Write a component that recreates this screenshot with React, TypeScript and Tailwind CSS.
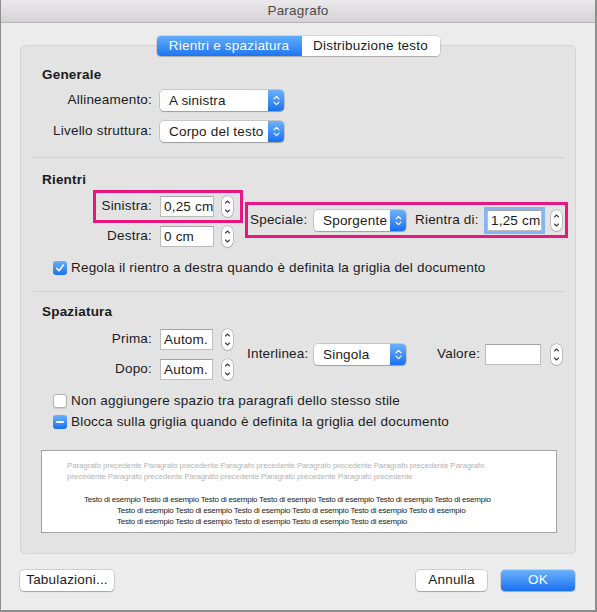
import React from "react";

type Sized = { value: string; className: string };

const Arrows = () => (
  <svg
    width="7"
    height="11"
    viewBox="0 0 7 11"
    fill="none"
    stroke="currentColor"
    strokeWidth="1.2"
    strokeLinecap="round"
    strokeLinejoin="round"
  >
    <path d="M1 3.8 3.5 1.3 6 3.8" />
    <path d="M1 7.2 3.5 9.7 6 7.2" />
  </svg>
);

const PopUp = ({ value, className }: Sized) => (
  <div
    className={
      "flex h-[21px] shrink-0 rounded-[4px] bg-white shadow-[0_0_0_0.5px_rgba(0,0,0,0.25),0_1px_1px_rgba(0,0,0,0.2)] " +
      className
    }
  >
    <span className="flex-1 overflow-hidden whitespace-nowrap pl-[9px] leading-[21px]">
      {value}
    </span>
    <span className="flex w-[16px] shrink-0 items-center justify-center rounded-r-[4px] bg-linear-to-b from-[#6ab1fb] to-[#1670f1] text-white">
      <Arrows />
    </span>
  </div>
);

const Field = ({ value, className }: Sized) => (
  <div
    className={
      "h-[21px] shrink-0 overflow-hidden whitespace-nowrap border border-[#bdbdbd] border-t-[#a3a3a3] bg-white pl-[3px] leading-[19px] " +
      className
    }
  >
    {value}
  </div>
);

const Stepper = ({ className = "" }: { className?: string }) => (
  <div
    className={
      "flex h-[21px] w-[11px] shrink-0 items-center justify-center rounded-full bg-white text-[#3c3c3c] shadow-[0_0_0_0.5px_rgba(0,0,0,0.3),0_1px_1px_rgba(0,0,0,0.15)] " +
      className
    }
  >
    <svg
      width="7"
      height="17"
      viewBox="0 0 7 17"
      fill="none"
      stroke="currentColor"
      strokeWidth="1.1"
      strokeLinecap="round"
      strokeLinejoin="round"
    >
      <path d="M1.5 5 3.5 3 5.5 5" />
      <path d="M1.5 12 3.5 14 5.5 12" />
    </svg>
  </div>
);

const Check = ({
  state,
  children,
}: {
  state: "off" | "on" | "mixed";
  children: React.ReactNode;
}) => (
  <div className="ml-[32px] flex h-[16px] items-center gap-[4px]">
    {state === "off" ? (
      <span className="h-[14px] w-[14px] shrink-0 rounded-[3px] bg-white shadow-[inset_0_0_0_1px_#b4b4b4,0_0.5px_1px_rgba(0,0,0,0.1)]" />
    ) : (
      <span className="flex h-[14px] w-[14px] shrink-0 items-center justify-center rounded-[3px] bg-linear-to-b from-[#6ab1fb] to-[#1670f1]">
        {state === "on" ? (
          <svg width="10" height="10" viewBox="0 0 10 10" fill="none" stroke="white" strokeWidth="1.5" strokeLinecap="round" strokeLinejoin="round">
            <path d="M1.8 5.4 4 7.8 8.3 2" />
          </svg>
        ) : (
          <span className="h-[2px] w-[8px] rounded-full bg-white" />
        )}
      </span>
    )}
    <span className="whitespace-nowrap">{children}</span>
  </div>
);

const Label = ({ children, className }: { children: React.ReactNode; className: string }) => (
  <span className={"shrink-0 whitespace-nowrap " + className}>{children}</span>
);

const Heading = ({ children, className }: { children: React.ReactNode; className: string }) => (
  <div className={"ml-[21px] h-[16px] font-bold leading-[16px] " + className}>{children}</div>
);

const Separator = ({ className }: { className: string }) => (
  <div className={"ml-[12px] h-px w-[531px] bg-[#d0d0d0] " + className} />
);

const sample = "Testo di esempio";
const prev = "Paragrafo precedente";

export default function App() {
  return (
    <div className="flex h-[612px] w-[597px] flex-col border-b-2 border-l border-r-2 border-[#8e8e8e] bg-[#ececec] font-['Liberation_Sans',Arial,sans-serif] text-[13.5px] tracking-[0.2px] text-[#1b1b1b]">
      {/* title bar */}
      <div className="flex h-[23px] shrink-0 items-center justify-center border-b border-[#b3b3b3] bg-linear-to-b from-[#ebe9eb] to-[#d4d2d4] text-[#4b4b4b]">
        Paragrafo
      </div>

      {/* tabs straddle the group box edge */}
      <div className="relative z-10 -mb-[11px] mt-[13px] flex h-[20px] justify-center">
        <div className="flex rounded-[4px] shadow-[0_0_0_0.5px_rgba(0,0,0,0.2),0_1px_1px_rgba(0,0,0,0.15)]">
          <div className="w-[145px] rounded-l-[4px] bg-linear-to-b from-[#62acfb] to-[#1b76f3] text-center leading-[20px] text-white">
            Rientri e spaziatura
          </div>
          <div className="w-[138px] rounded-r-[4px] bg-white text-center leading-[20px]">
            Distribuzione testo
          </div>
        </div>
      </div>

      <div className="ml-[19px] flex h-[509px] w-[556px] shrink-0 flex-col rounded-[5px] border border-[#d4d4d4] bg-[#e3e3e3]">
        <Heading className="mt-[21px]">Generale</Heading>
        <div className="mt-[7px] flex items-center gap-[8px]">
          <Label className="w-[131px] text-right">Allineamento:</Label>
          <PopUp value="A sinistra" className="w-[124px]" />
        </div>
        <div className="mt-[10px] flex items-center gap-[8px]">
          <Label className="w-[131px] text-right">Livello struttura:</Label>
          <PopUp value="Corpo del testo" className="w-[124px]" />
        </div>

        <Separator className="mt-[15px]" />

        <Heading className="mt-[14px]">Rientri</Heading>
        <div className="mt-[8px] flex items-start">
          <div className="flex flex-col gap-[9px]">
            <div className="relative flex items-center gap-[8px]">
              <Label className="w-[131px] text-right">Sinistra:</Label>
              <Field value="0,25 cm" className="w-[54px]" />
              <Stepper />
              <span className="pointer-events-none absolute -top-[6px] left-[72px] h-[33px] w-[150px] border-[3px] border-[#e8177f]" />
            </div>
            <div className="flex items-center gap-[8px]">
              <Label className="w-[131px] text-right">Destra:</Label>
              <Field value="0 cm" className="w-[54px]" />
              <Stepper />
            </div>
          </div>

          <div className="ml-[12px] mt-[6px] flex h-[36px] items-center border-[3px] border-[#e8177f] pl-[2px] pr-[3px]">
            <Label className="w-[64px]">Speciale:</Label>
            <PopUp value="Sporgente" className="w-[92px]" />
            <Label className="ml-[9px] w-[72px]">Rientra di:</Label>
            <Field value="1,25 cm" className="w-[55px] shadow-[0_0_0_3px_#86b3f1]" />
            <Stepper className="ml-[9px]" />
          </div>
        </div>

        <div className="mt-[13px]">
          <Check state="on">Regola il rientro a destra quando è definita la griglia del documento</Check>
        </div>

        <Separator className="mt-[15px]" />

        <Heading className="mt-[12px]">Spaziatura</Heading>
        <div className="mt-[9px] flex items-center">
          <div className="flex flex-col gap-[9px]">
            <div className="flex items-center gap-[8px]">
              <Label className="w-[131px] text-right">Prima:</Label>
              <Field value="Autom." className="w-[53px]" />
              <Stepper className="ml-[1px]" />
            </div>
            <div className="flex items-center gap-[8px]">
              <Label className="w-[131px] text-right">Dopo:</Label>
              <Field value="Autom." className="w-[53px]" />
              <Stepper className="ml-[1px]" />
            </div>
          </div>
          <Label className="ml-[14px] w-[67px]">Interlinea:</Label>
          <PopUp value="Singola" className="w-[92px]" />
          <Label className="ml-[31px] w-[48px]">Valore:</Label>
          <Field value="" className="w-[56px]" />
          <Stepper className="ml-[10px]" />
        </div>

        <div className="mt-[13px] flex flex-col gap-[5px]">
          <Check state="off">Non aggiungere spazio tra paragrafi dello stesso stile</Check>
          <Check state="mixed">Blocca sulla griglia quando è definita la griglia del documento</Check>
        </div>

        {/* anteprima */}
        <div className="ml-[20px] mt-[20px] h-[83px] w-[516px] border border-[#a3a3a3] bg-white pl-[25px] pt-[9px]">
          <div className="whitespace-nowrap text-[8px] leading-[11px] tracking-[-0.14px] text-[#b4b4b4]">
            <div>{`${prev} ${prev} ${prev} ${prev} ${prev} Paragrafo`}</div>
            <div>{`precedente ${prev} ${prev} ${prev} ${prev}`}</div>
          </div>
          <div className="mt-[12px] whitespace-nowrap text-[8px] leading-[11px] tracking-[-0.22px] text-[#222]">
            <div className="pl-[17px]">{Array(7).fill(sample).join(" ")}</div>
            <div className="pl-[50px]">{Array(6).fill(sample).join(" ")}</div>
            <div className="pl-[50px]">{Array(5).fill(sample).join(" ")}</div>
          </div>
        </div>
      </div>

      <div className="mt-[16px] flex pl-[19px] pr-[20px]">
        <button className="h-[21px] w-[94px] rounded-[4px] bg-white shadow-[0_0_0_0.5px_rgba(0,0,0,0.25),0_1px_1px_rgba(0,0,0,0.2)]">
          Tabulazioni...
        </button>
        <div className="flex-1" />
        <button className="h-[21px] w-[71px] rounded-[4px] bg-white shadow-[0_0_0_0.5px_rgba(0,0,0,0.25),0_1px_1px_rgba(0,0,0,0.2)]">
          Annulla
        </button>
        <button className="ml-[14px] h-[21px] w-[74px] rounded-[4px] bg-linear-to-b from-[#6ab1fb] to-[#1670f1] text-white shadow-[0_0_0_0.5px_rgba(0,0,0,0.2),0_1px_1px_rgba(0,0,0,0.2)]">
          OK
        </button>
      </div>
    </div>
  );
}
